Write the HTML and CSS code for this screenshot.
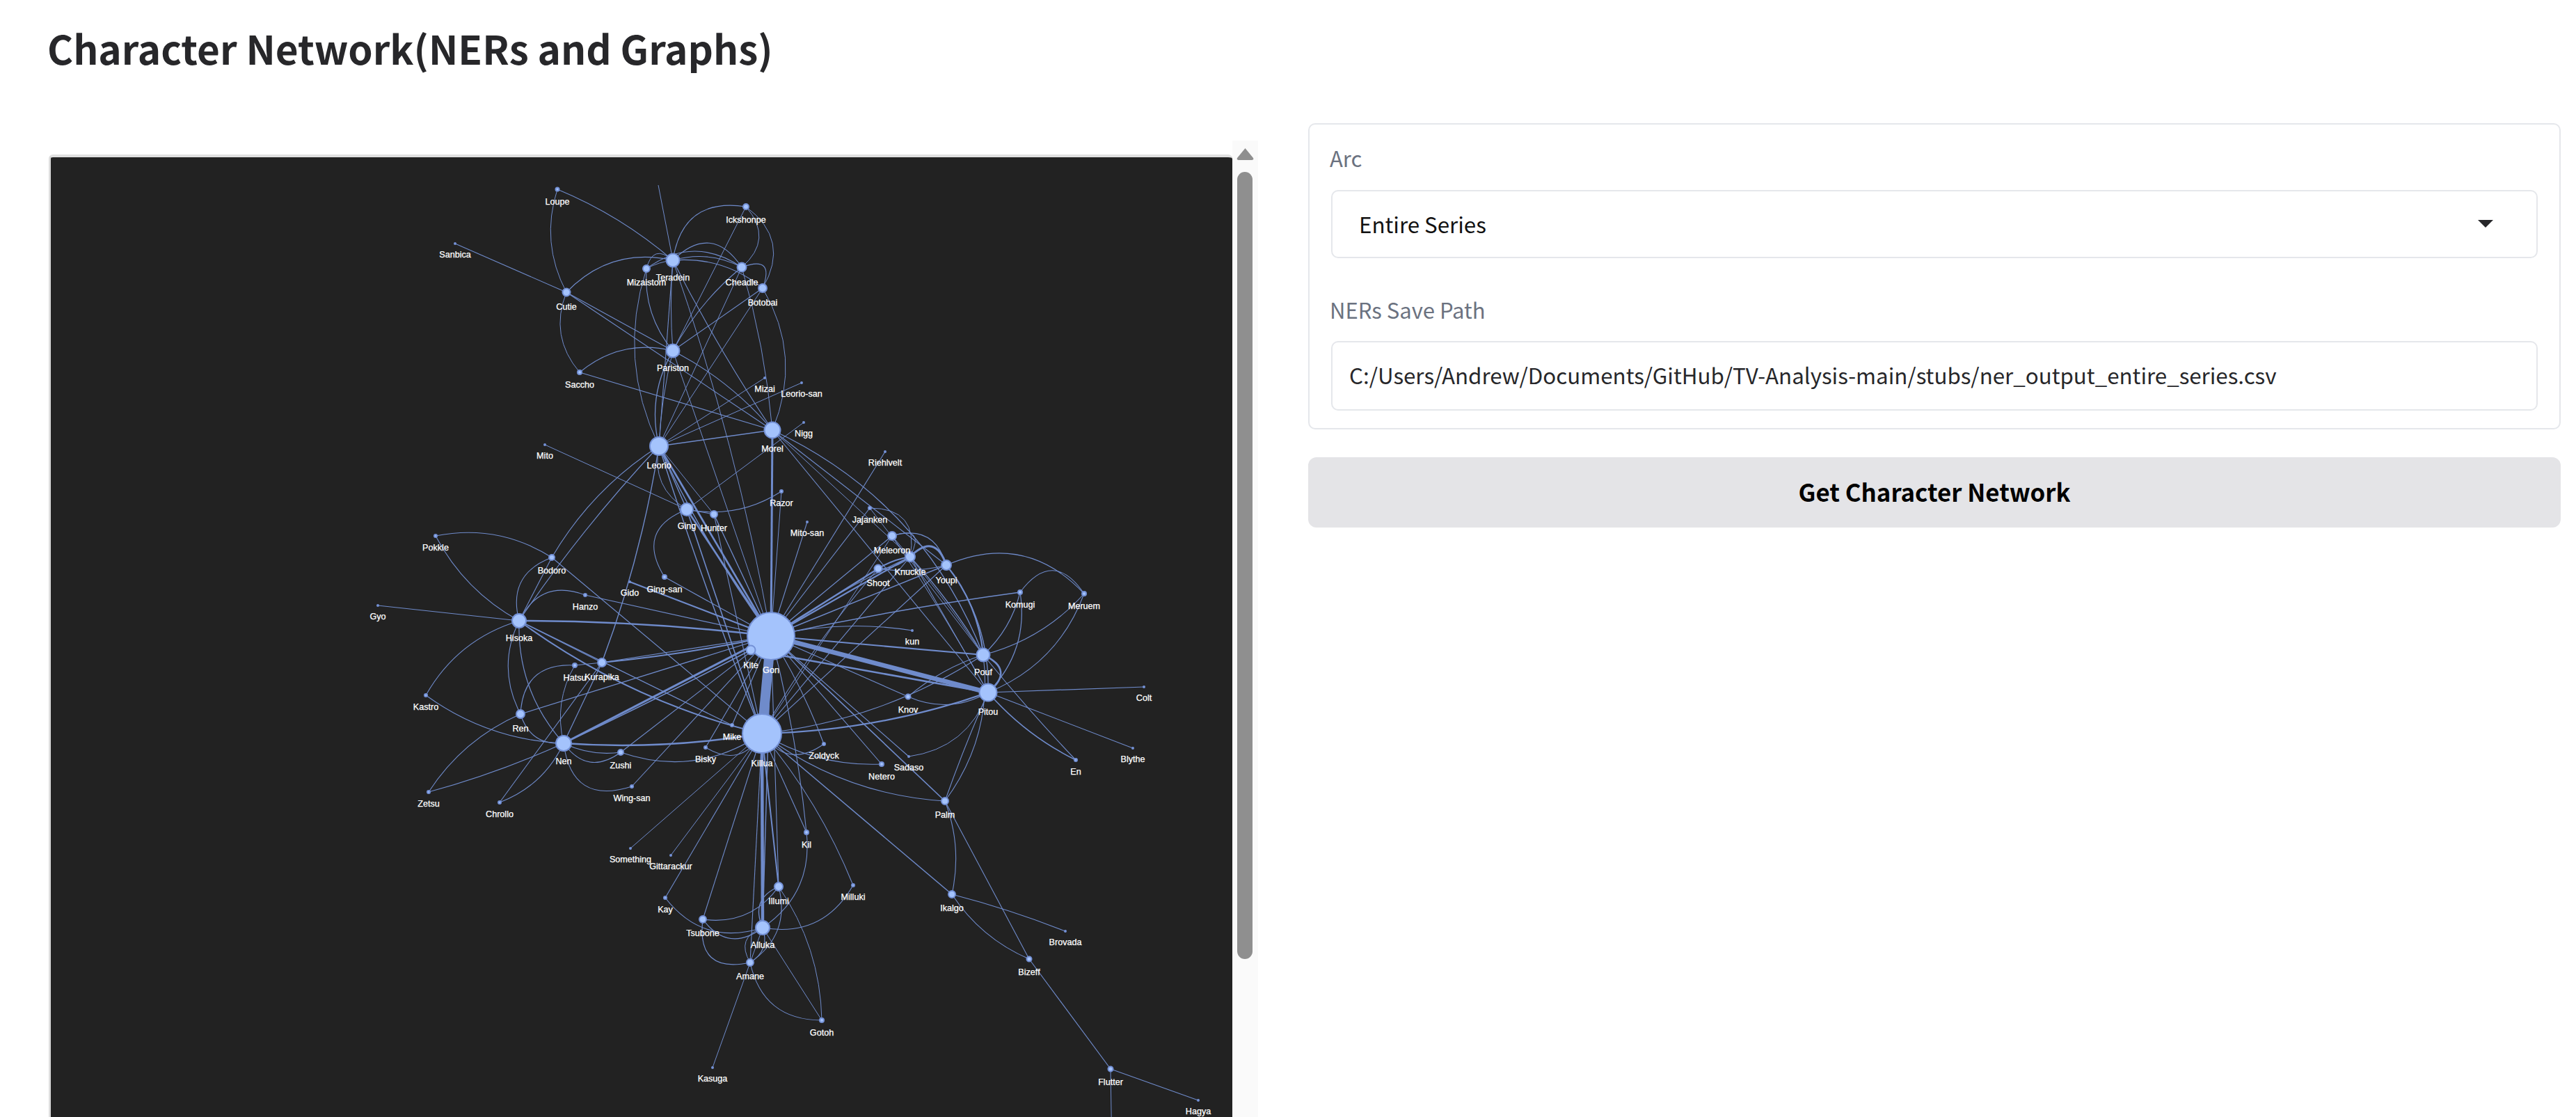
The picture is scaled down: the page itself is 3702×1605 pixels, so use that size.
FILE: index.html
```html
<!DOCTYPE html>
<html lang="en">
<head>
    <meta charset="UTF-8" />
    <title>Character Network(NERs and Graphs)</title>
    <link rel="stylesheet" href="styles.css">
</head>
<body>
    <div class="page">
        <h1 class="title">Character Network(NERs and Graphs)</h1>

        <div class="row">
            <div class="viewer">
                <div class="frame">
                    <svg id="graph" class="graph" viewBox="73 226 1698 1379" xmlns="http://www.w3.org/2000/svg"></svg>
                </div>
                <div class="rail">
                    <svg class="rail-arrow" viewBox="0 0 25 18"><path d="M12.5 1 L24 15 Q25 18 22 18 L3 18 Q0 18 1 15 Z" /></svg>
                    <div class="rail-thumb"></div>
                </div>
            </div>

            <div class="controls">
                <div class="panel">
                    <div class="label">Arc</div>
                    <div class="field field-select">
                        <span>Entire Series</span>
                        <svg class="caret" viewBox="0 0 22 11"><path d="M0 0 L22 0 L11 11 Z" /></svg>
                    </div>
                    <div class="label label-second">NERs Save Path</div>
                    <div class="field">C:/Users/Andrew/Documents/GitHub/TV-Analysis-main/stubs/ner_output_entire_series.csv</div>
                </div>
                <button class="submit" type="button">Get Character Network</button>
            </div>
        </div>
    </div>

    <script src="graph.js"></script>
</body>
</html>
```

FILE: styles.css
```css
html, body {
    margin: 0;
    height: 100%;
    overflow: hidden;
    background-color: #fff;
}

body {
    font-family: "Noto Sans CJK SC", "Noto Sans", sans-serif;
    color: #27272a;
}

.page {
    padding: 0 22px 0 68px;
}

.title {
    margin: 0;
    padding-top: 27px;
    height: 177px;
    box-sizing: border-box;
    font-size: 56.6px;
    line-height: 82px;
    font-weight: 600;
}

.row {
    display: flex;
    align-items: flex-start;
}

.viewer {
    display: flex;
    width: 1740px;
    margin-top: 25px;
    height: 1403px;
}

.frame {
    width: 1701px;
    margin-top: 20px;
    margin-left: 2px;
    height: 1383px;
    box-sizing: border-box;
    border-top: 4px solid #e0e0e0;
    border-left: 3px solid #dcdcdc;
    border-radius: 6px 6px 0 0;
    background-color: #222222;
    overflow: hidden;
}

.graph {
    display: block;
    width: 1698px;
    height: 1379px;
}

.graph .edge {
    fill: none;
    stroke: #6f8bcb;
}

.graph .node {
    fill: #a4c3fc;
    stroke: #7491d6;
    stroke-width: 2;
}

.graph .name {
    font-family: "Liberation Sans", Arial, sans-serif;
    font-size: 12.6px;
    fill: #ffffff;
    stroke: #ffffff;
    stroke-width: 0.25;
    text-anchor: middle;
    dominant-baseline: central;
}

.rail {
    width: 37px;
    height: 100%;
    box-sizing: border-box;
    padding: 10px 7px 0 6px;
    background-color: #fafafa;
    display: flex;
    flex-direction: column;
    align-items: center;
}

.rail-arrow {
    width: 25px;
    height: 18px;
    fill: #8f8f8f;
}

.rail-thumb {
    width: 22px;
    height: 1131px;
    margin-top: 17px;
    border-radius: 11px;
    background-color: #8f8f8f;
}

.controls {
    width: 1800px;
    margin-left: 72px;
}

.panel {
    box-sizing: border-box;
    height: 440px;
    padding: 28px 31px 0 31px;
    border: 2px solid #e5e7eb;
    border-radius: 10px;
}

.label {
    font-size: 31px;
    line-height: 40px;
    padding-bottom: 4px;
    margin-left: -2px;
    color: #6b7280;
}

.label-second {
    margin-top: 54px;
}

.field {
    box-sizing: border-box;
    height: 100px;
    margin-top: 21px;
    padding: 0 24px 3px;
    display: flex;
    align-items: center;
    font-size: 31.3px;
    color: #27272a;
    border: 2px solid #e5e7eb;
    border-radius: 10px;
}

.field-select {
    height: 98px;
    margin-top: 22px;
    padding: 0 40px 2px 38px;
    justify-content: space-between;
    color: #111;
}

.caret {
    width: 22px;
    height: 11px;
    margin-right: 22px;
    fill: #27272a;
}

.submit {
    display: block;
    width: 100%;
    height: 101px;
    margin-top: 40px;
    padding: 0 0 3px;
    border: none;
    border-radius: 12px;
    background-color: #e4e4e7;
    color: #000;
    font-family: inherit;
    font-size: 34.8px;
    font-weight: 600;
}
```

FILE: graph.js
```js
// name, x, y, radius (picture coordinates)
const nodes = [
    ["Loupe", 801, 272, 3.5], ["Sanbica", 654, 350, 2], ["Ickshonpe", 1072, 297, 5],
    ["Teradein", 967, 374, 10.5], ["Mizaistom", 929, 386, 6], ["Cheadle", 1066, 384, 7.5],
    ["Botobai", 1096, 414, 7], ["Cutie", 814, 420, 6.5], ["Pariston", 967, 504, 10.5],
    ["Saccho", 833, 535, 4], ["Mizai", 1099, 543, 2], ["Leorio-san", 1152, 550, 2],
    ["Nigg", 1155, 607, 2], ["Morel", 1110, 618, 12.5], ["Leorio", 947, 641, 14],
    ["Mito", 783, 639, 2], ["Riehlvelt", 1272, 649, 2], ["Razor", 1123, 706, 3],
    ["Ging", 987, 732, 10], ["Hunter", 1026, 739, 6], ["Mito-san", 1160, 750, 2],
    ["Pokkle", 626, 770, 3], ["Bodoro", 793, 801, 5], ["Ging-san", 955, 829, 4],
    ["Gido", 905, 836, 2], ["Hanzo", 841, 855, 3], ["Gyo", 543, 870, 2],
    ["Hisoka", 746, 892, 11], ["Gon", 1108, 914, 35], ["Kite", 1079, 934, 7.5],
    ["Hatsu", 826, 956, 4], ["Kurapika", 865, 952, 7], ["Kastro", 612, 999, 3],
    ["Ren", 748, 1026, 7], ["Mike", 1052, 1042, 3], ["Killua", 1095, 1054, 29],
    ["Nen", 810, 1068, 12], ["Zushi", 892, 1081, 5], ["Bisky", 1014, 1074, 3],
    ["Wing-san", 908, 1130, 3], ["Zetsu", 616, 1138, 3], ["Chrollo", 718, 1153, 3],
    ["Jajanken", 1250, 730, 3], ["Meleoron", 1282, 770, 7], ["Knuckle", 1308, 800, 8],
    ["Youpi", 1360, 812, 8], ["Shoot", 1262, 817, 6.5], ["Komugi", 1466, 851, 4],
    ["Meruem", 1558, 853, 4], ["kun", 1311, 906, 2], ["Pouf", 1413, 941, 10.5],
    ["Pitou", 1420, 995, 13.5], ["Colt", 1644, 987, 2], ["Knov", 1305, 1001, 4.5],
    ["Zoldyck", 1184, 1069, 3], ["Blythe", 1628, 1075, 2], ["En", 1546, 1092, 3],
    ["Sadaso", 1306, 1087, 2], ["Netero", 1267, 1098, 4], ["Palm", 1358, 1151, 6],
    ["Kil", 1159, 1196, 4], ["Something", 906, 1219, 2], ["Gittarackur", 964, 1229, 2],
    ["Kay", 956, 1290, 3], ["Illumi", 1119, 1274, 7], ["Tsubone", 1010, 1321, 6],
    ["Alluka", 1096, 1333, 11], ["Amane", 1078, 1383, 6], ["Gotoh", 1181, 1466, 4],
    ["Kasuga", 1024, 1534, 2], ["Milluki", 1226, 1272, 3], ["Ikalgo", 1368, 1285, 6],
    ["Brovada", 1531, 1338, 2], ["Bizeff", 1479, 1378, 4.5], ["Flutter", 1596, 1536, 4.5],
    ["Hagya", 1722, 1581, 2]
];

// ends with no label, the graph runs past them
const loose = { top: [946, 266], under: [1598, 1660] };

// from, to, stroke width, bend (share of the edge length, + is to the right of travel)
const edges = [
    ["Loupe", "Teradein", 1.1, -0.08], ["Loupe", "Cutie", 1, 0.21], ["Sanbica", "Cutie", 1.1, 0],
    ["top", "Teradein", 1, 0], ["Cutie", "Teradein", 1.2, -0.28], ["Cutie", "Pariston", 1.1, 0],
    ["Cutie", "Morel", 1.1, 0], ["Cutie", "Saccho", 1, 0.3], ["Saccho", "Pariston", 1.1, -0.25],
    ["Saccho", "Morel", 1.1, 0], ["Pariston", "Morel", 1.1, -0.1], ["Ickshonpe", "Teradein", 1.1, 0.5],
    ["Ickshonpe", "Botobai", 1, -0.45], ["Ickshonpe", "Cheadle", 1, -0.5], ["Ickshonpe", "Pariston", 1, 0],
    ["Teradein", "Cheadle", 1.1, -0.2], ["Teradein", "Cheadle", 1.1, -0.6], ["Mizaistom", "Cheadle", 1.1, -0.35],
    ["Mizaistom", "Teradein", 1, -0.1], ["Mizaistom", "Teradein", 1, -0.8], ["Teradein", "Botobai", 1.1, -0.2],
    ["Cheadle", "Botobai", 1.1, -1.1], ["Teradein", "Morel", 1.1, 0.03], ["Teradein", "Leorio", 1.1, 0],
    ["Teradein", "Pariston", 1, 0.04], ["Teradein", "Gon", 1, -0.04], ["Mizaistom", "Pariston", 1.1, 0.2],
    ["Mizaistom", "Leorio", 1, 0.2], ["Cheadle", "Pariston", 1.1, 0.1], ["Botobai", "Pariston", 1.1, 0],
    ["Cheadle", "Leorio", 1, 0], ["Botobai", "Leorio", 1, 0], ["Cheadle", "Morel", 1, -0.05],
    ["Botobai", "Morel", 1, -0.25], ["Pariston", "Leorio", 1.3, 0.2], ["Pariston", "Leorio", 1, 0.05],
    ["Pariston", "Gon", 1, 0], ["Leorio", "Morel", 1.5, 0], ["Leorio", "Mizai", 1, 0],
    ["Leorio", "Leorio-san", 1, 0], ["Nigg", "Ging", 1, 0], ["Mito", "Ging", 1, 0],
    ["Leorio", "Gon", 2.6, 0], ["Leorio", "Gon", 1.4, 0.05], ["Leorio", "Killua", 1.4, 0.02],
    ["Leorio", "Bodoro", 1.1, 0.12], ["Leorio", "Hisoka", 1.1, 0.04], ["Leorio", "Kurapika", 1.4, -0.05],
    ["Leorio", "Ging", 1, 0.35], ["Leorio", "Ging", 1.4, 0], ["Leorio", "Hunter", 1, 0],
    ["Razor", "Ging", 1.1, -0.2], ["Razor", "Gon", 1, 0], ["Morel", "Gon", 3, 0],
    ["Morel", "Pitou", 1.1, 0], ["Morel", "Pouf", 1.3, -0.2], ["Morel", "Youpi", 1.1, 0],
    ["Morel", "Knuckle", 1, 0], ["Riehlvelt", "Gon", 1.1, 0],
    ["Jajanken", "Gon", 1.1, 0], ["Jajanken", "Knuckle", 1, -0.6], ["Jajanken", "Pouf", 1, 0],
    ["Meleoron", "Youpi", 1.1, -0.5], ["Meleoron", "Knuckle", 1, -1.2], ["Meleoron", "Gon", 1.3, 0],
    ["Meleoron", "Pitou", 1, -0.02], ["Meleoron", "Pouf", 1, -0.03], ["Meleoron", "Killua", 1, 0],
    ["Knuckle", "Youpi", 3, -0.8], ["Knuckle", "Shoot", 2, 0.1], ["Knuckle", "Shoot", 1.1, -0.2],
    ["Shoot", "Youpi", 1.2, 0.1], ["Knuckle", "Gon", 2.2, 0], ["Knuckle", "Gon", 1.1, 0.04],
    ["Shoot", "Gon", 2.5, 0], ["Shoot", "Killua", 1.1, 0.05], ["Knuckle", "Killua", 1.1, 0],
    ["Youpi", "Gon", 1.4, 0], ["Youpi", "Killua", 1.1, 0], ["Youpi", "Pouf", 2, -0.15],
    ["Youpi", "Pitou", 1.3, -0.18], ["Knuckle", "Pouf", 1.2, -0.05], ["Knuckle", "Pitou", 1.1, 0],
    ["Youpi", "Meruem", 1.1, -0.35], ["Komugi", "Meruem", 1.1, -0.7], ["Komugi", "Gon", 1.5, 0.02],
    ["Komugi", "Pouf", 1.1, -0.15], ["Komugi", "Pitou", 1.2, -0.25], ["Meruem", "Pouf", 1.1, -0.15],
    ["Meruem", "Pitou", 1.1, -0.22], ["Pouf", "Pitou", 2.5, -0.8], ["Gon", "Pitou", 6.5, 0],
    ["Kite", "Pitou", 2.6, 0], ["Gon", "Pouf", 2.2, 0], ["Gon", "kun", 1.1, -0.1],
    ["Gon", "Knov", 1.1, 0], ["Knov", "Pouf", 1.1, -0.1], ["Knov", "Pitou", 1.1, 0.25],
    ["Killua", "Pitou", 2.2, 0.08], ["Killua", "Pouf", 1.1, 0.12], ["Pitou", "Blythe", 1.1, 0],
    ["Pitou", "Colt", 1.2, 0], ["Pitou", "En", 1.6, 0.1], ["Pouf", "En", 1.1, 0.02],
    ["Pitou", "Sadaso", 1, -0.3], ["Pitou", "Palm", 1.1, 0.02], ["Pouf", "Palm", 1.1, -0.2],
    ["Palm", "Gon", 1.6, 0], ["Palm", "Killua", 1.1, -0.15], ["Palm", "Ikalgo", 1.1, -0.15],
    ["Palm", "Bizeff", 1.1, 0], ["Ikalgo", "Killua", 1.4, 0], ["Ikalgo", "Brovada", 1.2, -0.03],
    ["Ikalgo", "Bizeff", 1.1, 0.15], ["Bizeff", "Flutter", 1.1, 0], ["Flutter", "Hagya", 1.1, 0],
    ["Flutter", "under", 1, 0], ["Netero", "Killua", 1.1, -0.15], ["Netero", "Gon", 1.1, 0],
    ["Sadaso", "Gon", 1.1, 0], ["Zoldyck", "Killua", 1.1, -0.5], ["Zoldyck", "Gon", 1.1, 0.05],
    ["Milluki", "Killua", 1.1, 0.08], ["Milluki", "Alluka", 1.1, -0.35], ["Kil", "Killua", 1.1, 0],
    ["Kil", "Gon", 1.1, 0.04], ["Kil", "Alluka", 1.1, -0.3], ["Killua", "Alluka", 4.5, 0],
    ["Gon", "Killua", 14, 0], ["Killua", "Illumi", 2, 0], ["Gon", "Illumi", 1.1, 0],
    ["Gon", "Alluka", 1.4, 0], ["Illumi", "Alluka", 1.3, 0.5], ["Illumi", "Tsubone", 1.2, -0.3],
    ["Illumi", "Amane", 1.1, -0.35], ["Illumi", "Gotoh", 1, -0.15], ["Kay", "Killua", 1.1, 0],
    ["Kay", "Alluka", 1.2, 0.35], ["Tsubone", "Killua", 1.1, 0], ["Tsubone", "Alluka", 1.2, 0.5],
    ["Tsubone", "Amane", 1.2, 0.7], ["Alluka", "Gotoh", 1, 0], ["Alluka", "Amane", 1.1, -0.4],
    ["Alluka", "Amane", 1, 0.6], ["Amane", "Gotoh", 1.1, 0.4], ["Amane", "Killua", 1.1, 0],
    ["Alluka", "Kasuga", 1, 0], ["Something", "Killua", 1, 0], ["Gittarackur", "Killua", 1, 0],
    ["Wing-san", "Nen", 1.1, -0.6], ["Wing-san", "Gon", 1.1, 0], ["Zushi", "Nen", 1.1, -0.5],
    ["Zushi", "Nen", 1.1, -0.15], ["Zushi", "Killua", 1.3, 0.25], ["Zushi", "Gon", 1.1, 0],
    ["Bisky", "Killua", 1.1, 0.5], ["Bisky", "Gon", 1.1, 0], ["Mike", "Gon", 1.1, 0],
    ["Mike", "Hisoka", 1.3, 0], ["Nen", "Killua", 2.5, 0.06], ["Nen", "Gon", 3, 0],
    ["Nen", "Kite", 1.6, 0.01], ["Nen", "Hisoka", 1.2, -0.2], ["Nen", "Ren", 1.1, -0.4],
    ["Nen", "Hatsu", 1, -0.2], ["Nen", "Kurapika", 1.2, 0], ["Nen", "Kastro", 1.1, -0.15],
    ["Nen", "Zetsu", 1.1, -0.04], ["Nen", "Chrollo", 1.1, -0.2], ["Chrollo", "Kurapika", 1.1, 0],
    ["Ren", "Zetsu", 1.1, 0.15], ["Ren", "Hisoka", 1.1, -0.25], ["Ren", "Gon", 1.2, 0],
    ["Hatsu", "Ren", 1.1, 0.5], ["Hatsu", "Kurapika", 1.1, 0], ["Kurapika", "Gon", 1.1, 0],
    ["Kurapika", "Gon", 2, 0.03], ["Kurapika", "Hisoka", 1.1, 0], ["Hisoka", "Gon", 2.6, -0.03],
    ["Hisoka", "Gyo", 1.1, 0], ["Hisoka", "Pokkle", 1.1, -0.15], ["Pokkle", "Bodoro", 1.1, -0.2],
    ["Hisoka", "Bodoro", 1.1, 0], ["Hisoka", "Bodoro", 1.1, -0.45], ["Hisoka", "Hanzo", 1.1, -0.45],
    ["Hanzo", "Gon", 1.1, 0], ["Hisoka", "Kastro", 1.1, 0.2], ["Hisoka", "Killua", 2, 0.1],
    ["Bodoro", "Killua", 1.1, 0], ["Gido", "Gon", 2, 0], ["Ging", "Ging-san", 1.1, 0.6],
    ["Ging-san", "Gon", 1.1, 0], ["Ging", "Gon", 2.6, 0], ["Ging", "Killua", 1.6, 0],
    ["Ging", "Hunter", 1.1, 0], ["Hunter", "Gon", 1.3, 0], ["Hunter", "Killua", 1.1, 0],
    ["Mito-san", "Gon", 1.1, 0]
];

const svgNs = "http://www.w3.org/2000/svg";
const graph = document.getElementById("graph");
const places = { ...loose };

nodes.forEach(([name, x, y]) => { places[name] = [x, y]; });

function add(tag, attrs, text) {
    const el = document.createElementNS(svgNs, tag);
    Object.keys(attrs).forEach((key) => el.setAttribute(key, attrs[key]));
    if (text) el.textContent = text;
    graph.appendChild(el);
}

edges.forEach(([from, to, width, bend]) => {
    const [x1, y1] = places[from];
    const [x2, y2] = places[to];
    const cx = (x1 + x2) / 2 - (y2 - y1) * bend;
    const cy = (y1 + y2) / 2 + (x2 - x1) * bend;
    add("path", {
        class: "edge",
        "stroke-width": width,
        d: `M${x1} ${y1} Q${cx} ${cy} ${x2} ${y2}`
    });
});

nodes.forEach(([name, x, y, r]) => {
    add("circle", { class: "node", cx: x, cy: y, r: Math.max(r - 1, 1) });
});

nodes.forEach(([name, x, y, r]) => {
    add("text", { class: "name", x: x, y: y + r + 14 }, name);
});
```
